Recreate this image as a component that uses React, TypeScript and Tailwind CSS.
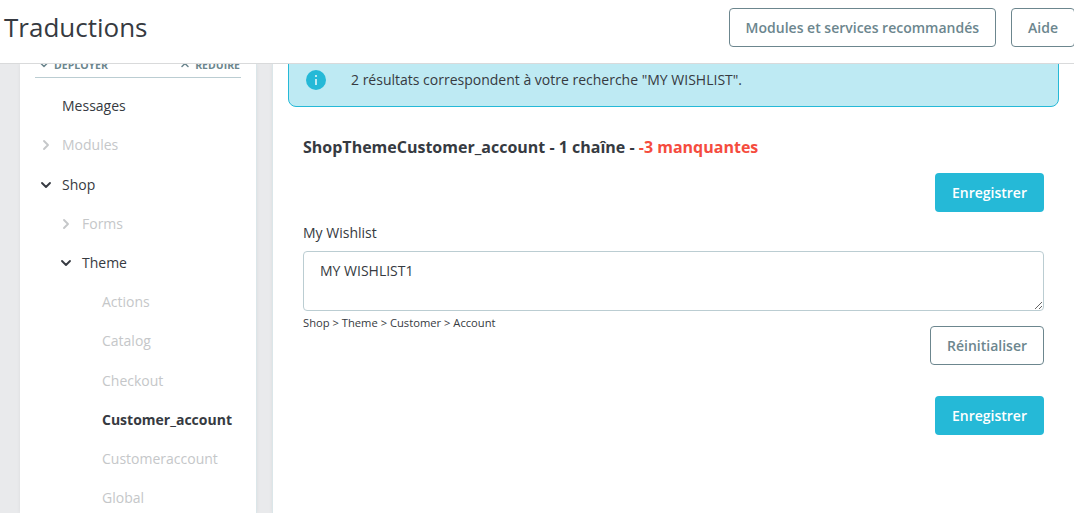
import { ChevronDown, ChevronRight, ChevronUp } from "lucide-react";
import { clsx } from "clsx";

type TreeItem = {
  label: string;
  level: 0 | 1 | 2;
  state?: "open" | "closed";
  tone: "dark" | "muted" | "current";
};

const treeItems: TreeItem[] = [
  { label: "Messages", level: 0, tone: "dark" },
  { label: "Modules", level: 0, state: "closed", tone: "muted" },
  { label: "Shop", level: 0, state: "open", tone: "dark" },
  { label: "Forms", level: 1, state: "closed", tone: "muted" },
  { label: "Theme", level: 1, state: "open", tone: "dark" },
  { label: "Actions", level: 2, tone: "muted" },
  { label: "Catalog", level: 2, tone: "muted" },
  { label: "Checkout", level: 2, tone: "muted" },
  { label: "Customer_account", level: 2, tone: "current" },
  { label: "Customeraccount", level: 2, tone: "muted" },
  { label: "Global", level: 2, tone: "muted" },
];

function OutlineButton({ label }: { label: string }) {
  return (
    <button className="h-[39px] shrink-0 whitespace-nowrap rounded border border-[#6c868e] bg-white px-4 text-sm font-semibold text-[#6c868e]">
      {label}
    </button>
  );
}

function SaveButton() {
  return (
    <button className="h-[39px] w-[109px] rounded bg-[#25b9d7] text-sm font-semibold text-white">
      Enregistrer
    </button>
  );
}

function Header() {
  return (
    <header className="flex h-16 shrink-0 justify-between border-b border-[#d9dadb] bg-white pl-1">
      <h1 className="pt-2.5 text-[26px] leading-[35px] text-[#363a41]">Traductions</h1>
      <div className="flex gap-[15px] pt-2 -mr-px">
        <OutlineButton label="Modules et services recommandés" />
        <OutlineButton label="Aide" />
      </div>
    </header>
  );
}

function Sidebar() {
  return (
    <aside className="w-[237px] shrink-0 border-r border-[#dbe6e9] bg-white shadow-[0_0_4px_rgba(0,0,0,0.06)]">
      {/* Expand / collapse, scrolled halfway under the header */}
      <div className="ml-[15px] -mt-2 flex h-[22px] w-[206px] justify-between border-b border-[#bbcdd2] pb-[3px] pl-[3px] text-[10.5px] font-bold leading-[17px] text-[#6c868e]">
        <span className="flex items-center gap-1">
          <ChevronDown className="size-3" strokeWidth={3} />
          DÉPLOYER
        </span>
        <span className="flex items-center gap-1 pr-px">
          <ChevronUp className="size-3" strokeWidth={3} />
          RÉDUIRE
        </span>
      </div>
      <ul className="pt-[8.6px]">
        {treeItems.map((item) => (
          <li
            key={item.label}
            className={clsx(
              "flex h-[39.2px] items-center text-sm",
              item.level === 0 && "pl-5",
              item.level === 1 && "pl-10",
              item.level === 2 && "pl-[60px]",
              item.tone === "dark" && "text-[#363a41]",
              item.tone === "muted" && "text-[#c5c7c9]",
              item.tone === "current" && "font-bold text-[#363a41]"
            )}
          >
            <span className="w-[22px] shrink-0">
              {item.state === "open" && <ChevronDown className="-ml-0.5 size-4" strokeWidth={2.8} />}
              {item.state === "closed" && <ChevronRight className="-ml-0.5 size-4" strokeWidth={2.8} />}
            </span>
            {item.label}
          </li>
        ))}
      </ul>
    </aside>
  );
}

function InfoIcon() {
  return (
    <svg className="size-5" viewBox="0 0 20 20">
      <circle cx="10" cy="10" r="10" fill="#25b9d7" />
      <path d="M9 5h2v2H9zM9 9h2v6H9z" fill="#beeaf3" />
    </svg>
  );
}

function TranslationForm() {
  return (
    <section className="px-[15px]">
      <h2 className="mt-7 text-base font-bold leading-6 text-[#363a41]">
        ShopThemeCustomer_account - 1 chaîne - <span className="text-[#f54c3e]">-3 manquantes</span>
      </h2>
      <div className="mt-3.5 flex justify-end">
        <SaveButton />
      </div>
      <label className="mt-[11px] block text-sm leading-5 text-[#363a41]" htmlFor="wishlist">
        My Wishlist
      </label>
      <textarea
        id="wishlist"
        className="mt-2 block h-[60px] w-full resize rounded border border-[#bbcdd2] px-4 py-2 text-sm leading-[21px] text-[#363a41]"
        defaultValue="MY WISHLIST1"
      />
      <p className="mt-1 text-[11.2px] leading-4 text-[#363a41]">Shop &gt; Theme &gt; Customer &gt; Account</p>
      <div className="-mt-[5px] flex flex-col items-end gap-[31px]">
        <OutlineButton label="Réinitialiser" />
        <SaveButton />
      </div>
    </section>
  );
}

export default function App() {
  return (
    <div className="flex h-[513px] w-[1074px] flex-col overflow-hidden bg-[#e9eaec] font-['Open_Sans',sans-serif]">
      <Header />
      <div className="flex min-h-0 flex-1 gap-[15px] overflow-hidden pl-5">
        <Sidebar />
        <main className="min-w-0 flex-1 border-l border-[#dbe6e9] bg-white pl-[15px] pr-[15px] shadow-[0_0_4px_rgba(0,0,0,0.06)]">
          <div className="-mt-5 flex h-[63px] items-center rounded-lg border border-[#25b9d7] bg-[#beeaf3] pl-[17px] pt-2 text-sm text-[#363a41]">
            <InfoIcon />
            <span className="ml-[25px]">2 résultats correspondent à votre recherche "MY WISHLIST".</span>
          </div>
          <TranslationForm />
        </main>
      </div>
    </div>
  );
}
